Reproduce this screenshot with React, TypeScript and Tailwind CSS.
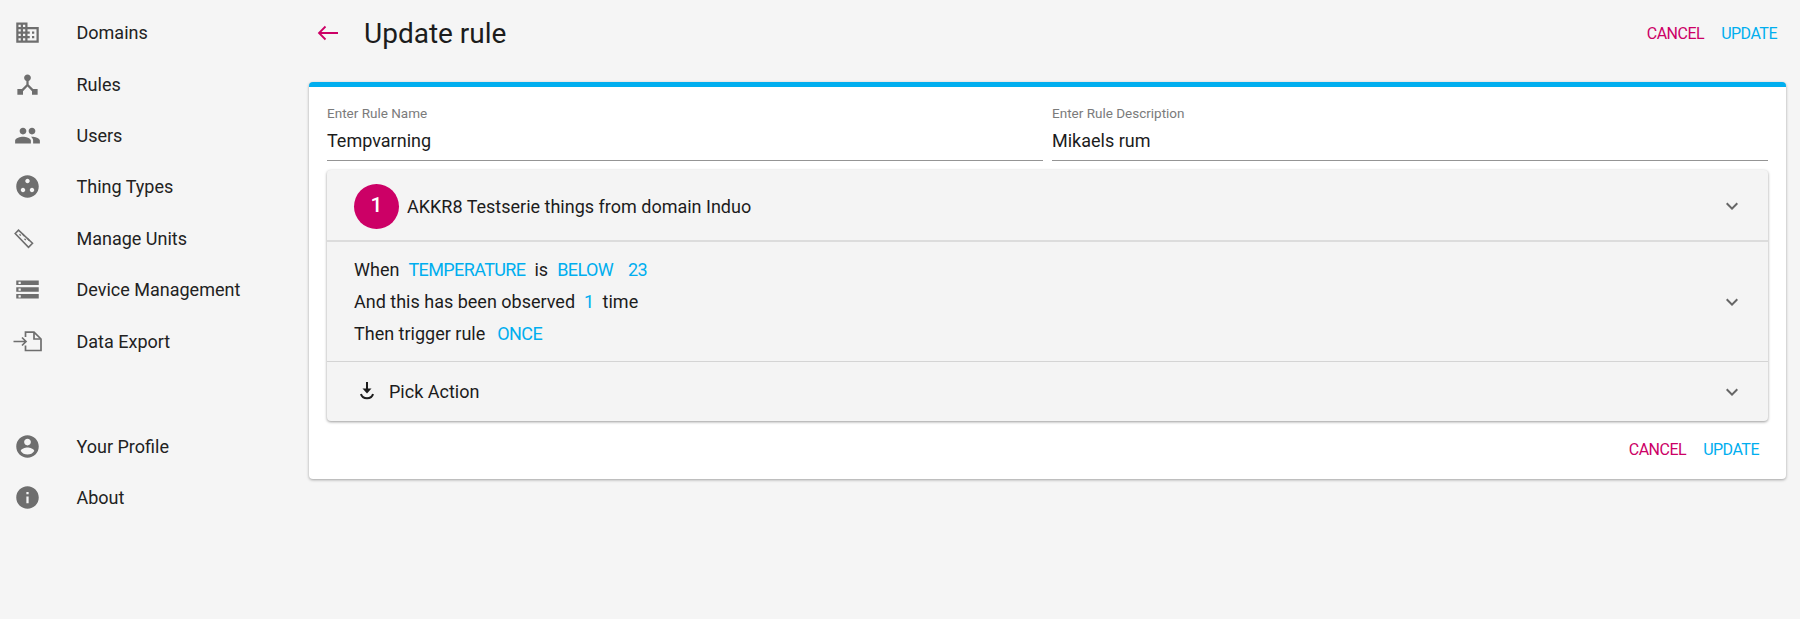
import { ReactNode } from "react";

const iconPaths: Record<string, string> = {
  domain:
    "M12 7V3H2v18h20V7H12zM6 19H4v-2h2v2zm0-4H4v-2h2v2zm0-4H4V9h2v2zm0-4H4V5h2v2zm4 12H8v-2h2v2zm0-4H8v-2h2v2zm0-4H8V9h2v2zm0-4H8V5h2v2zm10 12h-8v-2h2v-2h-2v-2h2v-2h-2V9h8v10zm-2-8h-2v2h2v-2zm0 4h-2v2h2v-2z",
  rules:
    "M17 16l-4-4V8.82C14.16 8.4 15 7.3 15 6c0-1.66-1.34-3-3-3S9 4.34 9 6c0 1.3.84 2.4 2 2.82V12l-4 4H3v5h5v-3.05l4-4.2 4 4.2V21h5v-5h-4z",
  users:
    "M16 11c1.66 0 2.99-1.34 2.99-3S17.66 5 16 5c-1.66 0-3 1.34-3 3s1.34 3 3 3zm-8 0c1.66 0 2.99-1.34 2.99-3S9.66 5 8 5C6.34 5 5 6.34 5 8s1.34 3 3 3zm0 2c-2.33 0-7 1.17-7 3.5V19h14v-2.5c0-2.33-4.67-3.5-7-3.5zm8 0c-.29 0-.62.02-.97.05 1.16.84 1.97 1.97 1.97 3.45V19h6v-2.5c0-2.33-4.67-3.5-7-3.5z",
  thing:
    "M12 2C6.48 2 2 6.48 2 12s4.48 10 10 10 10-4.48 10-10S17.52 2 12 2zM8 17c-1.1 0-2-.9-2-2s.9-2 2-2 2 .9 2 2-.9 2-2 2zm4-8c-1.1 0-2-.9-2-2s.9-2 2-2 2 .9 2 2-.9 2-2 2zm4 8c-1.1 0-2-.9-2-2s.9-2 2-2 2 .9 2 2-.9 2-2 2z",
  storage:
    "M2 20h20v-4H2v4zm2-3h2v2H4v-2zM2 4v4h20V4H2zm4 3H4V5h2v2zm-4 7h20v-4H2v4zm2-3h2v2H4v-2z",
  profile:
    "M12 2C6.48 2 2 6.48 2 12s4.48 10 10 10 10-4.48 10-10S17.52 2 12 2zm0 3c1.66 0 3 1.34 3 3s-1.34 3-3 3-3-1.34-3-3 1.34-3 3-3zm0 14.2c-2.5 0-4.71-1.28-6-3.22.03-1.99 4-3.08 6-3.08 1.99 0 5.97 1.09 6 3.08-1.29 1.94-3.5 3.22-6 3.22z",
  info: "M12 2C6.48 2 2 6.48 2 12s4.48 10 10 10 10-4.48 10-10S17.52 2 12 2zm1 15h-2v-6h2v6zm0-8h-2V7h2v2z",
};

function Icon({ name }: { name: string }) {
  return (
    <svg viewBox="0 0 24 24" className="w-[27px] h-[27px] fill-[#6e6e6e]">
      <path d={iconPaths[name]} />
    </svg>
  );
}

function RulerIcon() {
  return (
    <svg viewBox="0 0 27 27" className="w-[27px] h-[27px]" fill="none" stroke="#6e6e6e" strokeWidth="1.6">
      <path d="M1.200 8.500 4.500 5.200 18.500 18.200 14.500 22.400z" />
      <path d="M5.500 9.200l1.300 1.400M8.300 8.800l2 2.200M10.500 13.700l1.300 1.400M13.300 13.300l2 2.200" strokeWidth="1.300" />
    </svg>
  );
}

function ExportIcon() {
  return (
    <svg viewBox="0 0 27 27" className="w-[27px] h-[27px] overflow-visible" fill="none" stroke="#6e6e6e" strokeWidth="1.700">
      <path d="M-0.500 13.500H12M8 9.500l4 4-4 4" />
      <path d="M11.500 9V4.200h8.500l7 6.800v11.500H11.500V17.500" />
      <path d="M20 4.500V11h6.500" />
    </svg>
  );
}

function Chevron() {
  return (
    <svg viewBox="0 0 24 24" className="w-[24px] h-[24px] fill-[#666666]">
      <path d="M16.59 8.59L12 13.17 7.41 8.59 6 10l6 6 6-6z" />
    </svg>
  );
}

function NavRow({ icon, label }: { icon: ReactNode; label: string }) {
  return (
    <div className="flex items-center h-[51.4px]">
      <div className="w-[54px] flex justify-center">{icon}</div>
      <span className="ml-[22.500px] text-[18px] text-[#222222]">{label}</span>
    </div>
  );
}

function Blue({ children, className }: { children: ReactNode; className?: string }) {
  return <span className={`text-[#00aeef] tracking-[-0.6px] ${className ?? "mx-[9px]"}`}>{children}</span>;
}

function Field({ label, value }: { label: string; value: string }) {
  return (
    <div className="flex-1 border-b border-[#949494] h-[74px] pt-[17px]">
      <div className="text-[13.5px] leading-[18px] text-[#7b7b7b]">{label}</div>
      <div className="mt-[7px] text-[18px] leading-[24px] text-[#1c1c1c]">{value}</div>
    </div>
  );
}

function Actions() {
  return (
    <div className="flex gap-[17px] text-[16px] tracking-[-0.5px] leading-[24px]">
      <span className="text-[#cc0066]">CANCEL</span>
      <span className="text-[#00aeef]">UPDATE</span>
    </div>
  );
}

export default function App() {
  return (
    <div className="flex min-h-[619px] bg-[#f5f5f5] font-['Roboto',sans-serif]">
      <aside className="w-[309px] shrink-0 pt-[7px]">
        <NavRow icon={<Icon name="domain" />} label="Domains" />
        <NavRow icon={<Icon name="rules" />} label="Rules" />
        <NavRow icon={<Icon name="users" />} label="Users" />
        <NavRow icon={<Icon name="thing" />} label="Thing Types" />
        <NavRow icon={<RulerIcon />} label="Manage Units" />
        <NavRow icon={<Icon name="storage" />} label="Device Management" />
        <NavRow icon={<ExportIcon />} label="Data Export" />
        <div className="h-[53.8px]" />
        <NavRow icon={<Icon name="profile" />} label="Your Profile" />
        <NavRow icon={<Icon name="info" />} label="About" />
      </aside>

      <main className="flex-1 pr-[14px]">
        <header className="flex items-center h-[82px] pb-[14px]">
          <svg viewBox="0 0 22 16" className="w-[22px] h-[16px] ml-[8px] mb-[2px]" fill="none" stroke="#cc0066" strokeWidth="1.8">
            <path d="M21 8H2M8.500 1.500 2 8l6.500 6.500" />
          </svg>
          <h1 className="ml-[25px] text-[28px] leading-[34px] text-[#1c1c1c]">Update rule</h1>
          <div className="ml-auto mr-[9px]">
            <Actions />
          </div>
        </header>

        <section className="h-[397px] bg-white rounded-[4px] border-t-[5px] border-[#00aeef] shadow-[0_1px_3px_rgba(0,0,0,0.35)] px-[18px]">
          <div className="flex gap-[9px]">
            <Field label="Enter Rule Name" value="Tempvarning" />
            <Field label="Enter Rule Description" value="Mikaels rum" />
          </div>

          <div className="mt-[9px] rounded-[4px] bg-[#f4f4f4] shadow-[0_1px_3px_rgba(0,0,0,0.4)] text-[18px] text-[#1c1c1c]">
            <div className="flex items-center h-[72px] pt-[2px] pl-[27px] pr-[24px] border-b-[2px] border-[#dcdcdc]">
              <div className="flex items-center justify-center w-[45px] h-[45px] rounded-full bg-[#cc0066] text-white text-[21px] font-medium">1</div>
              <span className="ml-[8px]">AKKR8 Testserie things from domain Induo</span>
              <div className="ml-auto"><Chevron /></div>
            </div>

            <div className="flex items-center h-[120px] pl-[27px] pr-[24px] border-b border-[#d4d4d4]">
              <div className="flex flex-col gap-[8px] leading-[24px]">
                <div>When<Blue>TEMPERATURE</Blue>is<Blue>BELOW</Blue><Blue className="ml-[6px]">23</Blue></div>
                <div>And this has been observed<Blue>1</Blue>time</div>
                <div>Then trigger rule<Blue className="ml-[12px]">ONCE</Blue></div>
              </div>
              <div className="ml-auto"><Chevron /></div>
            </div>

            <div className="flex items-center h-[59px] pl-[30px] pr-[24px]">
              <svg viewBox="0 0 20 20" className="w-[20px] h-[20px]" fill="none" stroke="#1c1c1c" strokeWidth="2">
                <path d="M10 0v7" />
                <path d="M5.500 6.500h9L10 11.500z" fill="#1c1c1c" stroke="none" />
                <path d="M4 12c.6 2.500 3 4.200 6 4.200s5.400-1.700 6-4.200" />
              </svg>
              <span className="ml-[12px]">Pick Action</span>
              <div className="ml-auto"><Chevron /></div>
            </div>
          </div>

          <div className="flex justify-end h-[58px] items-center pr-[9px]">
            <Actions />
          </div>
        </section>
      </main>
    </div>
  );
}
